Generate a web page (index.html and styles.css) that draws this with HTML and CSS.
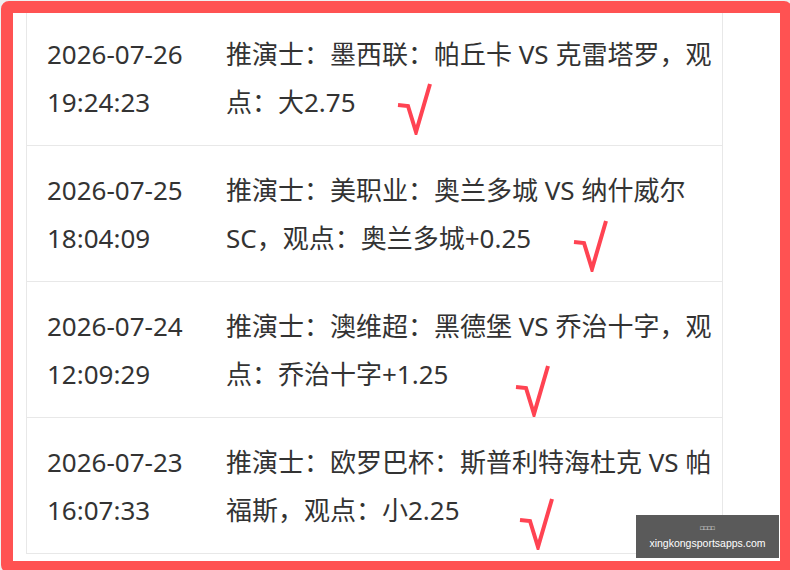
FILE: index.html
```html
<!doctype html>
<html>
<head>
 <meta http-equiv="Content-Type" content="text/html; charset=utf-8">
 <title>推演记录</title>
 <link rel="stylesheet" href="styles.css">
</head>
<body>
  <div class="frame">
    <ul class="list">
      <li class="row">
        <div class="time">2026-07-26 19:24:23</div>
        <div class="info">推演士：墨西联：帕丘卡 VS 克雷塔罗，观点：大2.75<svg class="ok ok1" viewBox="0 0 36 54"><polyline points="2,24 12,25 20,51 34,3"/></svg></div>
      </li>
      <li class="row">
        <div class="time">2026-07-25 18:04:09</div>
        <div class="info">推演士：美职业：奥兰多城 VS 纳什威尔SC，观点：奥兰多城+0.25<svg class="ok ok2" viewBox="0 0 36 54"><polyline points="2,24 12,25 20,51 34,3"/></svg></div>
      </li>
      <li class="row">
        <div class="time">2026-07-24 12:09:29</div>
        <div class="info">推演士：澳维超：黑德堡 VS 乔治十字，观点：乔治十字+1.25<svg class="ok ok3" viewBox="0 0 36 54"><polyline points="2,24 12,25 20,51 34,3"/></svg></div>
      </li>
      <li class="row">
        <div class="time">2026-07-23 16:07:33</div>
        <div class="info">推演士：欧罗巴杯：斯普利特海杜克 VS 帕福斯，观点：小2.25<svg class="ok ok4" viewBox="0 0 36 54"><polyline points="2,24 12,25 20,51 34,3"/></svg></div>
      </li>
    </ul>
  </div>

  <!--水印-->
  <div class="mark">
    <p class="mark-cn">□□□□</p>
    <p class="mark-url">xingkongsportsapps.com</p>
  </div>
</body>
</html>
```

FILE: styles.css
```css
html,body{margin:0;padding:0;}
html{overflow:hidden;}
body{background:#f0f0f0;font-family:"Noto Sans","Noto Sans CJK SC",sans-serif;color:#333;}
ul,li,p{margin:0;padding:0;}
ul{list-style:none;}

.frame{width:767px;height:548px;margin:1px 0 0 1px;border:12px solid #ff5252;border-radius:8px;background:#fff;overflow:hidden;}
.list{width:695px;margin:-4px 0 0 13px;border:1px solid #e8e8e8;border-bottom:0;}
.row{display:flex;padding:20px 0 19px 20px;border-bottom:1px solid #e8e8e8;font-size:26px;line-height:48px;}
.time{width:179px;flex-shrink:0;}
.info{width:495px;}

.ok{display:inline-block;width:36px;height:54px;vertical-align:baseline;}
.ok polyline{fill:none;stroke:#ff4352;stroke-width:4;stroke-linejoin:miter;}
.ok1{margin:0 0 -23px 40px;}
.ok2{margin:0 0 -24px 41px;}
.ok3{margin:0 0 -33px 66px;}
.ok4{margin:0 0 -30px 58px;}

.mark{position:fixed;right:11px;bottom:12px;width:143px;height:43px;padding-top:9px;box-sizing:border-box;background:#5a5a5a;color:#fff;text-align:center;font-family:"Liberation Sans",Arial,sans-serif;}
.mark-cn{font-size:6px;line-height:8px;}
.mark-url{margin-top:5px;font-size:10.5px;line-height:12px;}
```
